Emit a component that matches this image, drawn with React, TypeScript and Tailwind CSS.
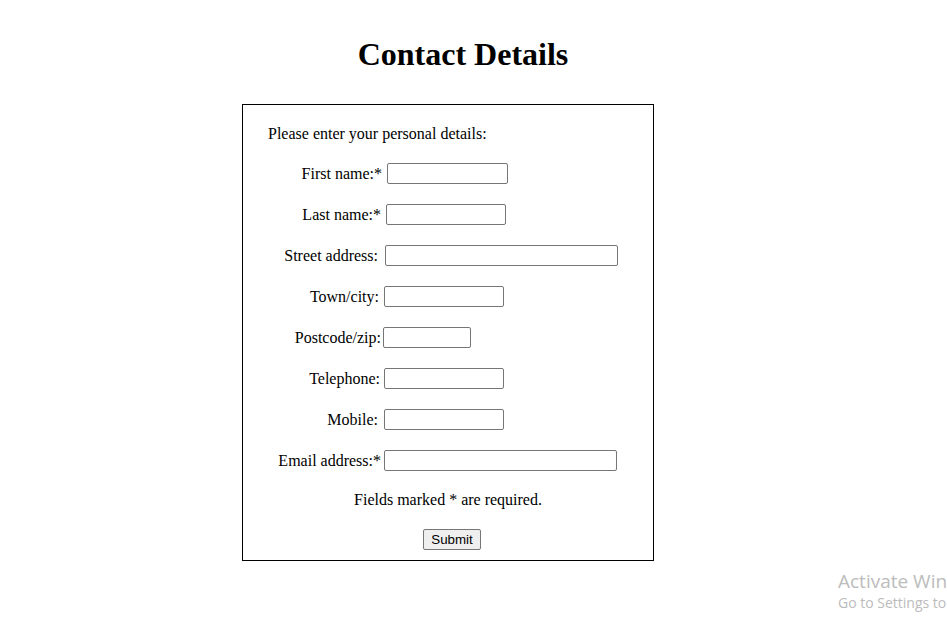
import React from "react"

const fields = [
  { label: "First name:*", labelCls: "pr-[1px]", inputCls: "ml-[4px] w-[121px]" },
  { label: "Last name:*", labelCls: "pr-[2px]", inputCls: "ml-[3px] w-[120px]" },
  { label: "Street address:", labelCls: "pr-[5px]", inputCls: "ml-[2px] w-[233px]" },
  { label: "Town/city:", labelCls: "pr-[4px]", inputCls: "ml-[1px] w-[120px]" },
  { label: "Postcode/zip:", labelCls: "pr-[2px]", inputCls: "ml-0 w-[88px]" },
  { label: "Telephone:", labelCls: "pr-[3px]", inputCls: "ml-[1px] w-[120px]" },
  { label: "Mobile:", labelCls: "pr-[5px]", inputCls: "ml-[1px] w-[120px]" },
  { label: "Email address:*", labelCls: "pr-[2px]", inputCls: "ml-[1px] w-[233px]" },
]

export default function App() {
  return (
    <div className="relative w-[947px] h-[623px] overflow-hidden bg-white text-black font-['Liberation_Serif',serif] text-[16px] leading-[18px]">
      <h1 className="pt-[36px] pr-[21px] text-center text-[32px] leading-[37px] font-bold">
        Contact Details
      </h1>

      <form className="mt-[31px] ml-[242px] w-[412px] border border-black pt-[20px] pb-[10px] flex flex-col gap-5">
        <p className="pl-[25px]">Please enter your personal details:</p>

        {fields.map((f) => (
          <div key={f.label} className="flex items-center h-[21px]">
            <label className={`w-[140px] text-right whitespace-nowrap ${f.labelCls}`}>{f.label}</label>
            <input
              type="text"
              className={`h-[21px] rounded-[2px] border border-[#767676] bg-white ${f.inputCls}`}
            />
          </div>
        ))}

        <p className="text-center">Fields marked * are required.</p>

        <div className="flex justify-center pl-[8px]">
          <button
            type="button"
            className="h-[21px] w-[58px] rounded-[2px] border border-[#767676] bg-[#efefef] font-['Liberation_Sans',sans-serif] text-[13.33px] leading-[15px]"
          >
            Submit
          </button>
        </div>
      </form>

      <div className="absolute left-[838px] top-[569px] whitespace-nowrap font-['Open_Sans',sans-serif] text-[#bcbcbc]">
        <div className="text-[19px] leading-[24px]">Activate Windows</div>
        <div className="text-[14px] leading-[19px]">Go to Settings to activate Windows.</div>
      </div>
    </div>
  )
}
